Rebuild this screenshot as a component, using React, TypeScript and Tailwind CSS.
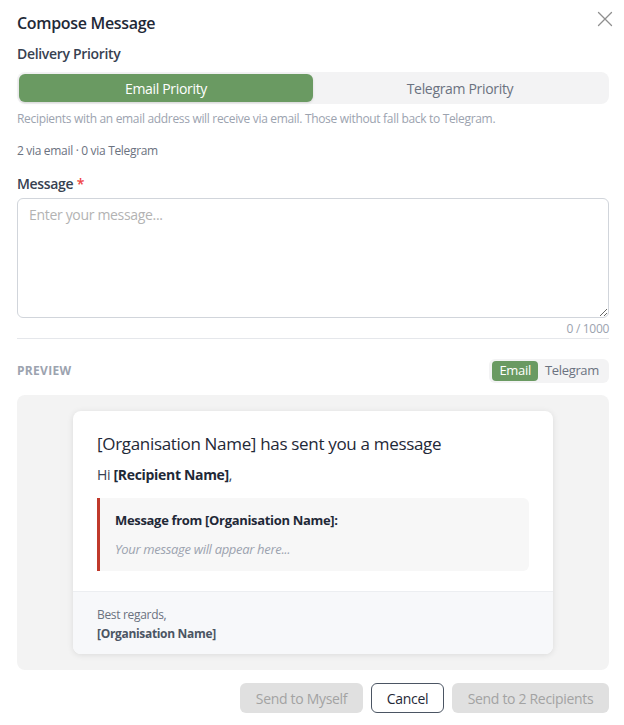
import React, { useState } from "react";

const FONT = { fontFamily: '"Open Sans", "Noto Sans", sans-serif' };

export default function App() {
  const [priority, setPriority] = useState<"email" | "telegram">("email");
  const [view, setView] = useState<"email" | "telegram">("email");
  const [text, setText] = useState("");

  return (
    <div
      className="relative w-[624px] h-[725px] bg-white pl-[17px] pr-[15px] text-[#1f2937] tracking-[-0.02em]"
      style={FONT}
    >
      {/* close button */}
      <button className="absolute left-[597px] top-[11px] w-[16px] h-[16px]" aria-label="Close">
        <svg width="16" height="16" viewBox="0 0 16 16" fill="none">
          <path d="M1.5 1.5L14.5 14.5M14.5 1.5L1.5 14.5" stroke="#8f8f8f" strokeWidth="1.3" strokeLinecap="round" />
        </svg>
      </button>

      <h2 className="pt-[11px] text-[16px] leading-[24px] font-semibold text-[#1f2937]">Compose Message</h2>

      <div className="mt-[9px] text-[14px] leading-[20px] font-semibold text-[#374151]">Delivery Priority</div>

      <div className="mt-[8px] h-[32px] p-[2px] rounded-lg bg-[#f3f3f4] flex">
        <button
          onClick={() => setPriority("email")}
          className={
            priority === "email"
              ? "flex-1 rounded-md bg-[#6a9a62] text-white text-[14px] shadow-sm"
              : "flex-1 rounded-md text-[#6b7280] text-[14px]"
          }
        >
          Email Priority
        </button>
        <button
          onClick={() => setPriority("telegram")}
          className={
            priority === "telegram"
              ? "flex-1 rounded-md bg-[#6a9a62] text-white text-[14px] shadow-sm"
              : "flex-1 rounded-md text-[#6b7280] text-[14px]"
          }
        >
          Telegram Priority
        </button>
      </div>

      <p className="mt-[7px] text-[12px] leading-[16px] text-[#9ca3af]">
        Recipients with an email address will receive via email. Those without fall back to Telegram.
      </p>

      <p className="mt-[16px] text-[12px] leading-[16px] text-[#6b7280]">2 via email · 0 via Telegram</p>

      <label className="block mt-[15px] text-[14px] leading-[20px] font-semibold text-[#374151]">
        Message <span className="text-[#ef4444]">*</span>
      </label>

      <textarea
        value={text}
        onChange={(e) => setText(e.target.value)}
        placeholder="Enter your message..."
        className="mt-[4px] block w-full h-[120px] rounded-md border border-[#d1d5db] px-[11px] py-[6px] text-[14px] leading-[20px] text-[#1f2937] placeholder:text-[#b3b3b3] outline-none"
        style={FONT}
      />

      <div className="mt-[3px] text-right text-[12px] leading-[16px] text-[#9ca3af]">{text.length} / 1000</div>

      <div className="mt-[1px] border-t border-[#e5e7eb]" />

      <div className="mt-[20px] h-[24px] flex items-center justify-between">
        <span className="text-[12px] font-bold tracking-wide text-[#9ca3af]">PREVIEW</span>
        <div className="h-[24px] px-[3px] py-[2px] rounded-md bg-[#f3f3f4] flex text-[13px]">
          <button
            onClick={() => setView("email")}
            className={
              view === "email"
                ? "px-[7px] rounded bg-[#6a9a62] text-white"
                : "px-[7px] rounded text-[#6b7280]"
            }
          >
            Email
          </button>
          <button
            onClick={() => setView("telegram")}
            className={
              view === "telegram"
                ? "px-[7px] rounded bg-[#6a9a62] text-white"
                : "px-[7px] rounded text-[#6b7280]"
            }
          >
            Telegram
          </button>
        </div>
      </div>

      {/* preview area */}
      <div className="mt-[12px] rounded-lg bg-[#f3f3f3] pt-[16px] pb-[16px] flex justify-center">
        <div className="w-[480px] rounded-lg bg-white shadow-[0_1px_6px_rgba(0,0,0,0.1)] overflow-hidden">
          <div className="px-[24px] pt-[21px] pb-[20px]">
            <h3 className="text-[17px] leading-[24px] text-[#1f2937]">[Organisation Name] has sent you a message</h3>
            <p className="mt-[9px] text-[14px] leading-[20px] text-[#374151]">
              Hi <strong className="font-bold text-[#1f2937]">[Recipient Name]</strong>,
            </p>
            <div className="mt-[13px] border-l-[3px] border-[#c0392b] rounded-r-md bg-[#f7f7f7] pl-[15px] pr-[16px] pt-[13px] pb-[12px]">
              <div className="text-[13px] leading-[18px] font-bold text-[#1f2937]">Message from [Organisation Name]:</div>
              <div className="mt-[10px] text-[13px] leading-[20px] italic text-[#9ca3af]">Your message will appear here...</div>
            </div>
          </div>
          <div className="border-t border-[#eceef1] bg-[#f7f8fa] px-[24px] pt-[15px] pb-[12px]">
            <div className="text-[12px] leading-[16px] text-[#6b7280]">Best regards,</div>
            <div className="mt-[3px] text-[12px] leading-[16px] font-bold text-[#4b5563]">[Organisation Name]</div>
          </div>
        </div>
      </div>

      <div className="mt-[13px] flex justify-end gap-[8px]">
        <button disabled className="h-[30px] w-[123px] rounded-md bg-[#e0e0e0] text-[14px] text-[#a3a3a3]">
          Send to Myself
        </button>
        <button className="h-[30px] w-[73px] rounded-md border border-[#4b5563] bg-white text-[14px] text-[#1f2937]">
          Cancel
        </button>
        <button disabled className="h-[30px] w-[157px] rounded-md bg-[#e0e0e0] text-[14px] text-[#a3a3a3]">
          Send to 2 Recipients
        </button>
      </div>
    </div>
  );
}
